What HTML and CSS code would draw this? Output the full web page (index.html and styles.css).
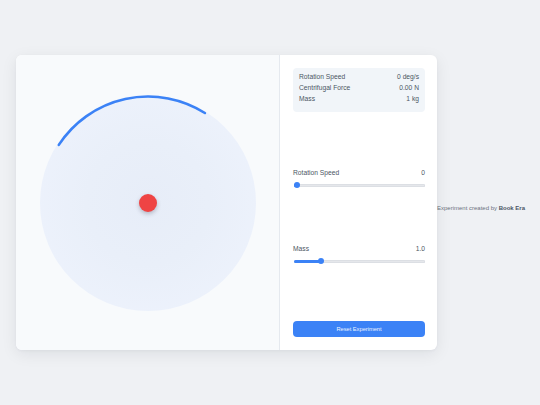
FILE: index.html
```html
<!DOCTYPE html>
<html>
<head>
<meta charset="utf-8">
<link rel="stylesheet" href="styles.css">
</head>
<body>
<div class="stage">
  <div class="card">
    <div class="sim">
      <div class="table">
        <svg class="arc" viewBox="0 0 216 216" width="216" height="216">
          <path d="M18.8 49.9 A106.5 106.5 0 0 1 164.9 18.0" fill="none" stroke="#3b82f6" stroke-width="2.6" stroke-linecap="round"/>
        </svg>
        <div class="ball"></div>
      </div>
    </div>
    <div class="panel">
      <div class="stats">
        <div class="row"><span>Rotation Speed</span><span>0 deg/s</span></div>
        <div class="row"><span>Centrifugal Force</span><span>0.00 N</span></div>
        <div class="row"><span>Mass</span><span>1 kg</span></div>
      </div>
      <div class="control">
        <div class="clabel"><span>Rotation Speed</span><span>0</span></div>
        <div class="slider">
          <div class="track"><div class="fill" style="width:3px"></div></div>
          <div class="thumb" style="left:0px"></div>
        </div>
      </div>
      <div class="control">
        <div class="clabel"><span>Mass</span><span>1.0</span></div>
        <div class="slider">
          <div class="track"><div class="fill" style="width:27px"></div></div>
          <div class="thumb" style="left:24px"></div>
        </div>
      </div>
      <button class="reset">Reset Experiment</button>
    </div>
  </div>
  <div class="credit">Experiment created by <b>Book Era</b></div>
</div>
</body>
</html>
```
FILE: styles.css
```css
html, body {
  margin: 0;
  padding: 0;
}
body {
  background: #eff1f4;
  font-family: "Liberation Sans", Arial, sans-serif;
  width: 540px;
  height: 405px;
  overflow: hidden;
}
.stage {
  height: 405px;
  display: flex;
  align-items: center;
  justify-content: center;
}
.card {
  width: 421px;
  height: 295px;
  display: flex;
  background: #ffffff;
  border-radius: 6px;
  box-shadow: 0 4px 16px rgba(15, 23, 42, 0.08), 0 1px 3px rgba(15, 23, 42, 0.04);
  overflow: hidden;
}
.sim {
  width: 263px;
  background: #f8fafc;
  border-right: 1px solid #e5e9ef;
  display: flex;
  align-items: center;
  justify-content: center;
}
.table {
  position: relative;
  width: 216px;
  height: 216px;
  border-radius: 50%;
  background: radial-gradient(circle at center, #e7edf8 0%, #e9eff9 40%, #edf2fc 80%, #eef3fc 100%);
  display: flex;
  align-items: center;
  justify-content: center;
}
.arc {
  position: absolute;
  left: 0;
  top: 0;
  overflow: visible;
}
.ball {
  width: 18px;
  height: 18px;
  border-radius: 50%;
  background: #ef4444;
  box-shadow: 0 2px 4px rgba(60, 60, 80, 0.3);
}
.panel {
  flex: 1;
  padding: 13px 12px 13px 13px;
  display: flex;
  flex-direction: column;
  justify-content: space-between;
  color: #4b5563;
}
.stats {
  background: #f1f5f9;
  border-radius: 4px;
  height: 44px;
  box-sizing: border-box;
  padding: 5px 6px 0 6px;
  font-size: 6.7px;
}
.row {
  display: flex;
  justify-content: space-between;
  line-height: 8px;
  margin-bottom: 2.8px;
}
.control {
  height: 19px;
  font-size: 6.7px;
}
.clabel {
  display: flex;
  justify-content: space-between;
  line-height: 8px;
  margin-bottom: 5px;
}
.slider {
  position: relative;
  height: 6px;
  margin-left: 1px;
}
.track {
  position: absolute;
  left: 0;
  right: 0;
  top: 1.5px;
  height: 3px;
  background: #e5e7eb;
  border-radius: 2px;
  box-shadow: inset 0 0 0 0.5px #d4d8de;
  overflow: hidden;
}
.fill {
  height: 3px;
  background: #3b82f6;
}
.thumb {
  position: absolute;
  top: 0;
  width: 6px;
  height: 6px;
  border-radius: 50%;
  background: #3b82f6;
}
.reset {
  height: 16px;
  width: 100%;
  border: none;
  border-radius: 4px;
  background: #3b82f6;
  color: #eef4ff;
  font-family: "Liberation Sans", Arial, sans-serif;
  font-size: 5.7px;
  padding: 0;
}
.credit {
  width: 87px;
  font-size: 6px;
  color: #6b7280;
  white-space: nowrap;
  margin-top: 10px;
}
.credit b {
  color: #4b5563;
}
```
